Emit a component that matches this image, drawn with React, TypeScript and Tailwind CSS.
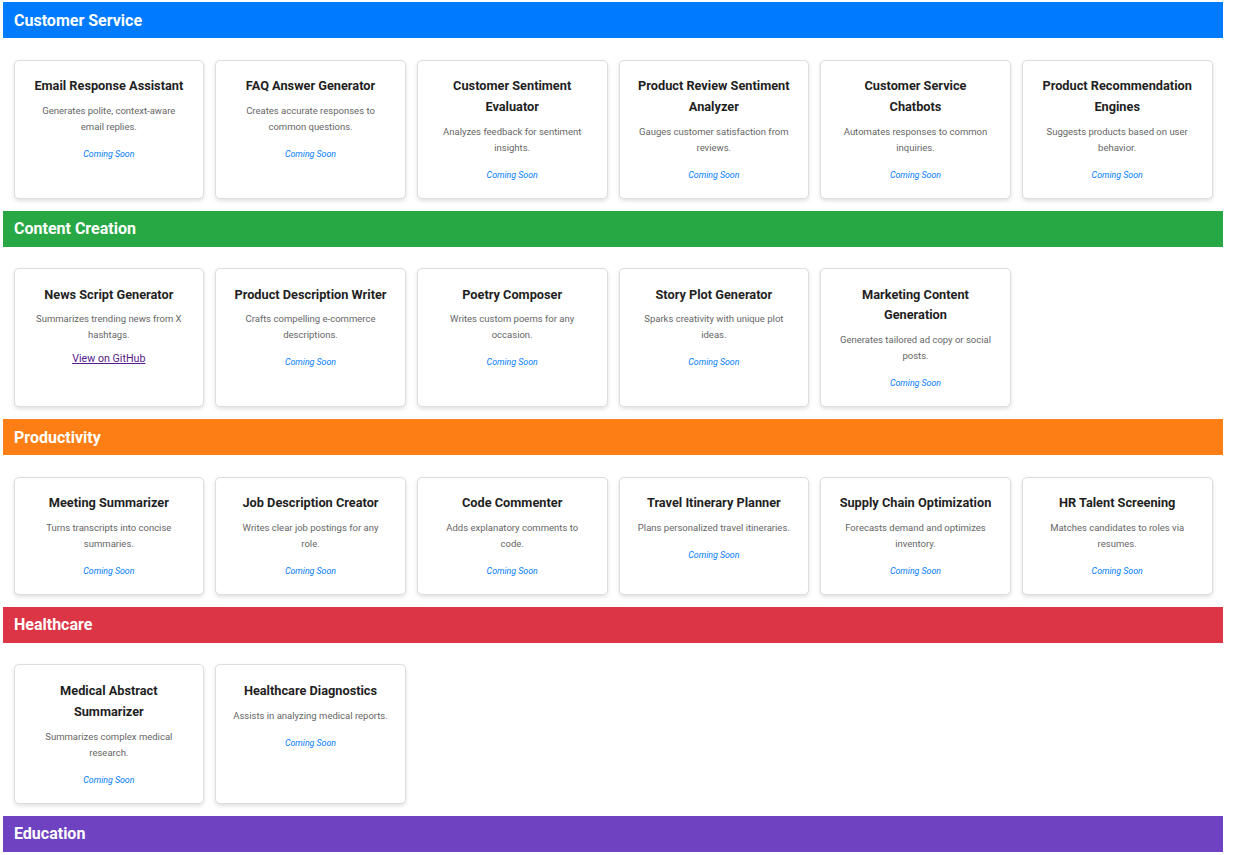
import React from "react";

type Tool = { title: string; desc: string; link?: string };
type Section = { name: string; color: string; tools: Tool[] };

const sections: Section[] = [
  {
    name: "Customer Service",
    color: "bg-[#007bff]",
    tools: [
      { title: "Email Response Assistant", desc: "Generates polite, context-aware email replies." },
      { title: "FAQ Answer Generator", desc: "Creates accurate responses to common questions." },
      { title: "Customer Sentiment Evaluator", desc: "Analyzes feedback for sentiment insights." },
      { title: "Product Review Sentiment Analyzer", desc: "Gauges customer satisfaction from reviews." },
      { title: "Customer Service Chatbots", desc: "Automates responses to common inquiries." },
      { title: "Product Recommendation Engines", desc: "Suggests products based on user behavior." },
    ],
  },
  {
    name: "Content Creation",
    color: "bg-[#28a745]",
    tools: [
      { title: "News Script Generator", desc: "Summarizes trending news from X hashtags.", link: "View on GitHub" },
      { title: "Product Description Writer", desc: "Crafts compelling e-commerce descriptions." },
      { title: "Poetry Composer", desc: "Writes custom poems for any occasion." },
      { title: "Story Plot Generator", desc: "Sparks creativity with unique plot ideas." },
      { title: "Marketing Content Generation", desc: "Generates tailored ad copy or social posts." },
    ],
  },
  {
    name: "Productivity",
    color: "bg-[#fd7e14]",
    tools: [
      { title: "Meeting Summarizer", desc: "Turns transcripts into concise summaries." },
      { title: "Job Description Creator", desc: "Writes clear job postings for any role." },
      { title: "Code Commenter", desc: "Adds explanatory comments to code." },
      { title: "Travel Itinerary Planner", desc: "Plans personalized travel itineraries." },
      { title: "Supply Chain Optimization", desc: "Forecasts demand and optimizes inventory." },
      { title: "HR Talent Screening", desc: "Matches candidates to roles via resumes." },
    ],
  },
  {
    name: "Healthcare",
    color: "bg-[#dc3545]",
    tools: [
      { title: "Medical Abstract Summarizer", desc: "Summarizes complex medical research." },
      { title: "Healthcare Diagnostics", desc: "Assists in analyzing medical reports." },
    ],
  },
  {
    name: "Education",
    color: "bg-[#6f42c1]",
    tools: [
      { title: "Study Guide Generator", desc: "Creates concise study notes from texts." },
      { title: "Quiz Creator", desc: "Builds quizzes for any subject." },
    ],
  },
];

function Card({ tool }: { tool: Tool }) {
  return (
    <div className="flex flex-col items-center rounded-[5px] border border-[#dddddd] bg-white px-[16.4px] pt-[15.6px] pb-[16.1px] text-center shadow-[0_2px_4px_rgba(0,0,0,0.12)]">
      <h3 className="m-0 text-[12.75px] font-bold leading-[20.8px] text-[#1f1f1f]">{tool.title}</h3>
      <p className="mt-[6px] text-[9.5px] leading-[16px] text-[#666666]">{tool.desc}</p>
      {tool.link ? (
        <a href="#" className="mt-[8px] text-[10.7px] leading-[16px] text-[#551a8b] underline">
          {tool.link}
        </a>
      ) : (
        <span className="mt-[12px] text-[8.8px] italic leading-[14px] text-[#007bff]">Coming Soon</span>
      )}
    </div>
  );
}

export default function App() {
  return (
    <div className="min-h-screen bg-white px-[3px] pt-[2px] font-['Roboto',_'Liberation_Sans',_sans-serif]">
      {sections.map((s) => (
        <section key={s.name} className="w-[1220px]">
          <h2 className={`${s.color} m-0 flex h-[36px] items-center px-[11px] pt-[1px] text-[16px] font-bold text-white`}>
            {s.name}
          </h2>
          <div className="grid grid-cols-6 gap-x-[11px] px-[10.5px] pt-[21.5px] pb-[11.8px]">
            {s.tools.map((t) => (
              <Card key={t.title} tool={t} />
            ))}
          </div>
        </section>
      ))}
    </div>
  );
}
